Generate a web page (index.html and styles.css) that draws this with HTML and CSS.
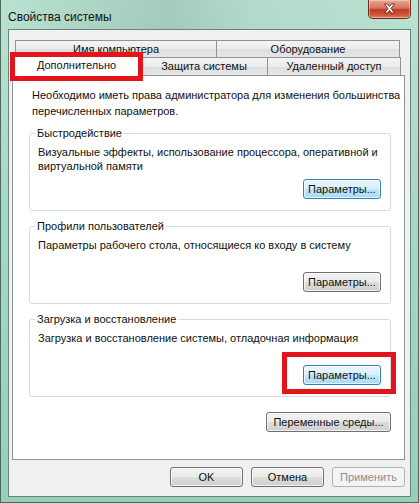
FILE: index.html
```html
<!DOCTYPE html>
<html lang="ru">
<head>
<meta charset="utf-8">
<title>Свойства системы</title>
<link rel="stylesheet" href="styles.css">
</head>
<body>
<div class="window">
  <div class="titlebar">
    <span class="title">Свойства системы</span>
    <div class="close">
      <svg width="43" height="19" viewBox="0 0 43 19">
        <path d="M16.5 5 L19.5 5 L21.5 7.6 L23.5 5 L26.5 5 L23 9.5 L26.5 14 L23.5 14 L21.5 11.4 L19.5 14 L16.5 14 L20 9.5 Z" fill="#fff" stroke="#6b2318" stroke-width="0.9" stroke-linejoin="round"/>
      </svg>
    </div>
  </div>
  <div class="client">
    <div class="tabs">
      <div class="tabrow back">
        <div class="tab t-name">Имя компьютера</div>
        <div class="tab t-hw">Оборудование</div>
      </div>
      <div class="tabrow front">
        <div class="tab active marked">Дополнительно</div>
        <div class="tab t-prot">Защита системы</div>
        <div class="tab t-remote">Удаленный доступ</div>
      </div>
    </div>
    <div class="panel">
      <p class="note">Необходимо иметь права администратора для изменения большинства перечисленных параметров.</p>
      <fieldset class="group">
        <legend>Быстродействие</legend>
        <div class="gbody">
          <p class="desc">Визуальные эффекты, использование процессора, оперативной и виртуальной памяти</p>
          <div class="btnrow"><button class="btn blue">Параметры...</button></div>
        </div>
      </fieldset>
      <fieldset class="group">
        <legend>Профили пользователей</legend>
        <div class="gbody">
          <p class="desc">Параметры рабочего стола, относящиеся ко входу в систему</p>
          <div class="btnrow"><button class="btn">Параметры...</button></div>
        </div>
      </fieldset>
      <fieldset class="group">
        <legend>Загрузка и восстановление</legend>
        <div class="gbody">
          <p class="desc">Загрузка и восстановление системы, отладочная информация</p>
          <div class="btnrow"><span class="marker"><button class="btn blue">Параметры...</button></span></div>
        </div>
      </fieldset>
      <div class="envrow"><button class="btn env">Переменные среды...</button></div>
    </div>
    <div class="footer">
      <button class="btn foot">OK</button>
      <button class="btn foot">Отмена</button>
      <button class="btn foot disabled">Применить</button>
    </div>
  </div>
</div>
</body>
</html>
```
FILE: styles.css
```css
* { box-sizing: border-box; }

body {
  margin: 0;
  width: 419px;
  height: 503px;
  overflow: hidden;
  font-family: "Liberation Sans", Arial, sans-serif;
  font-size: 11px;
  color: #111;
}

.window {
  width: 419px;
  height: 503px;
  background:
    linear-gradient(90deg, rgba(60,80,70,0.0) 0%, rgba(60,80,70,0.16) 40%, rgba(60,80,70,0.05) 60%, rgba(60,80,70,0.0) 100%) top/100% 30px no-repeat,
    linear-gradient(180deg, #b9e2d2 0%, #a6d9c5 40%, #94d0b9 100%);
  border: 1px solid #4d6a62;
  border-top: none;
  display: flex;
  flex-direction: column;
}

.titlebar {
  height: 29px;
  display: flex;
  justify-content: space-between;
  align-items: flex-start;
  padding-left: 7px;
}

.title {
  margin-top: 9px;
  line-height: 16px;
  font-size: 12px;
}

.close {
  width: 43px;
  height: 19px;
  margin-right: 7px;
  border: 1px solid #6d2a1f;
  border-top: none;
  border-radius: 0 0 5px 5px;
  background: linear-gradient(180deg, #e9a796 0%, #d8725d 45%, #c2391f 55%, #cf5a3e 85%, #e0886c 100%);
  box-shadow: inset 0 0 0 1px rgba(255,255,255,0.35);
}

.close svg { display: block; margin: -1px 0 0 -1px; }

.client {
  margin: 0 7px;
  height: 468px;
  background: #f0f0f0;
  border: 1px solid #6a837d;
  display: flex;
  flex-direction: column;
}

.tabs { margin-top: 10px; }

.tabrow { display: flex; }

.tabrow.back { height: 17px; margin-left: 6px; }
.tabrow.front { height: 18px; margin-left: 3px; align-items: flex-end; }

.tab {
  height: 100%;
  border: 1px solid #8f939b;
  border-bottom: none;
  background: linear-gradient(180deg, #f4f4f4 0%, #ebebeb 50%, #dedede 51%, #e6e6e6 100%);
  text-align: center;
  line-height: 16px;
  white-space: nowrap;
}

.tab + .tab { margin-left: -1px; }

.t-name { width: 202px; }
.t-hw { width: 184px; }
.t-prot { width: 128px; }
.t-remote { width: 134px; }

.tab.active {
  position: relative;
  z-index: 2;
  width: 129px;
  height: 21px;
  margin-bottom: -1px;
  background: #fff;
  line-height: 18px;
}

.marked::after {
  content: "";
  position: absolute;
  left: -3px;
  right: -3px;
  top: -4px;
  bottom: -5px;
  border: 5px solid #e3141c;
}

.panel {
  margin-left: 3px;
  width: 393px;
  height: 385px;
  background: #fff;
  border: 1px solid #8f939b;
  padding: 11px 0 0 16px;
}

.note {
  margin: 0 0 6px 3px;
  line-height: 16px;
}

.group {
  display: block;
  margin: 0 0 7px 0;
  width: 362px;
  border: 1px solid #d5dbe0;
  border-radius: 3px;
  padding: 0 4px 11px 8px;
  min-inline-size: 0;
}

.group legend {
  padding: 0 2px;
  margin-left: -3px;
  line-height: 16px;
}

.gbody {
  height: 58px;
  display: flex;
  flex-direction: column;
}

.desc {
  margin: 4px 0 0 0;
  line-height: 14px;
}

.btnrow {
  margin-top: auto;
  margin-right: 5px;
  display: flex;
  justify-content: flex-end;
}

.btn {
  font-family: inherit;
  font-size: 11px;
  color: #111;
  height: 20px;
  width: 78px;
  padding: 0;
  line-height: 17px;
  border: 1px solid #707070;
  border-radius: 3px;
  background: linear-gradient(180deg, #f2f2f2 0%, #ebebeb 48%, #dddddd 52%, #cfcfcf 100%);
  box-shadow: inset 0 0 0 1px rgba(255,255,255,0.7);
}

.btn.blue {
  border-color: #3c7fb1;
  background: linear-gradient(180deg, #eaf6fd 0%, #d9f0fc 48%, #bee6fd 52%, #a7d9f5 100%);
}

.marker { position: relative; display: inline-block; }
.marker::after {
  content: "";
  position: absolute;
  left: -21px;
  right: -15px;
  top: -13px;
  bottom: -9px;
  border: 5px solid #e3141c;
}

.envrow {
  margin-top: 15px;
  width: 362px;
  display: flex;
  justify-content: flex-end;
}

.btn.env { width: 125px; }

.footer {
  display: flex;
  justify-content: flex-end;
  gap: 8px;
  padding: 7px 5px 0 0;
}

.btn.foot { width: 73px; }

.btn.disabled {
  color: #8d8d8d;
  border-color: #adb2b5;
  background: #f4f4f4;
  box-shadow: none;
}
```
